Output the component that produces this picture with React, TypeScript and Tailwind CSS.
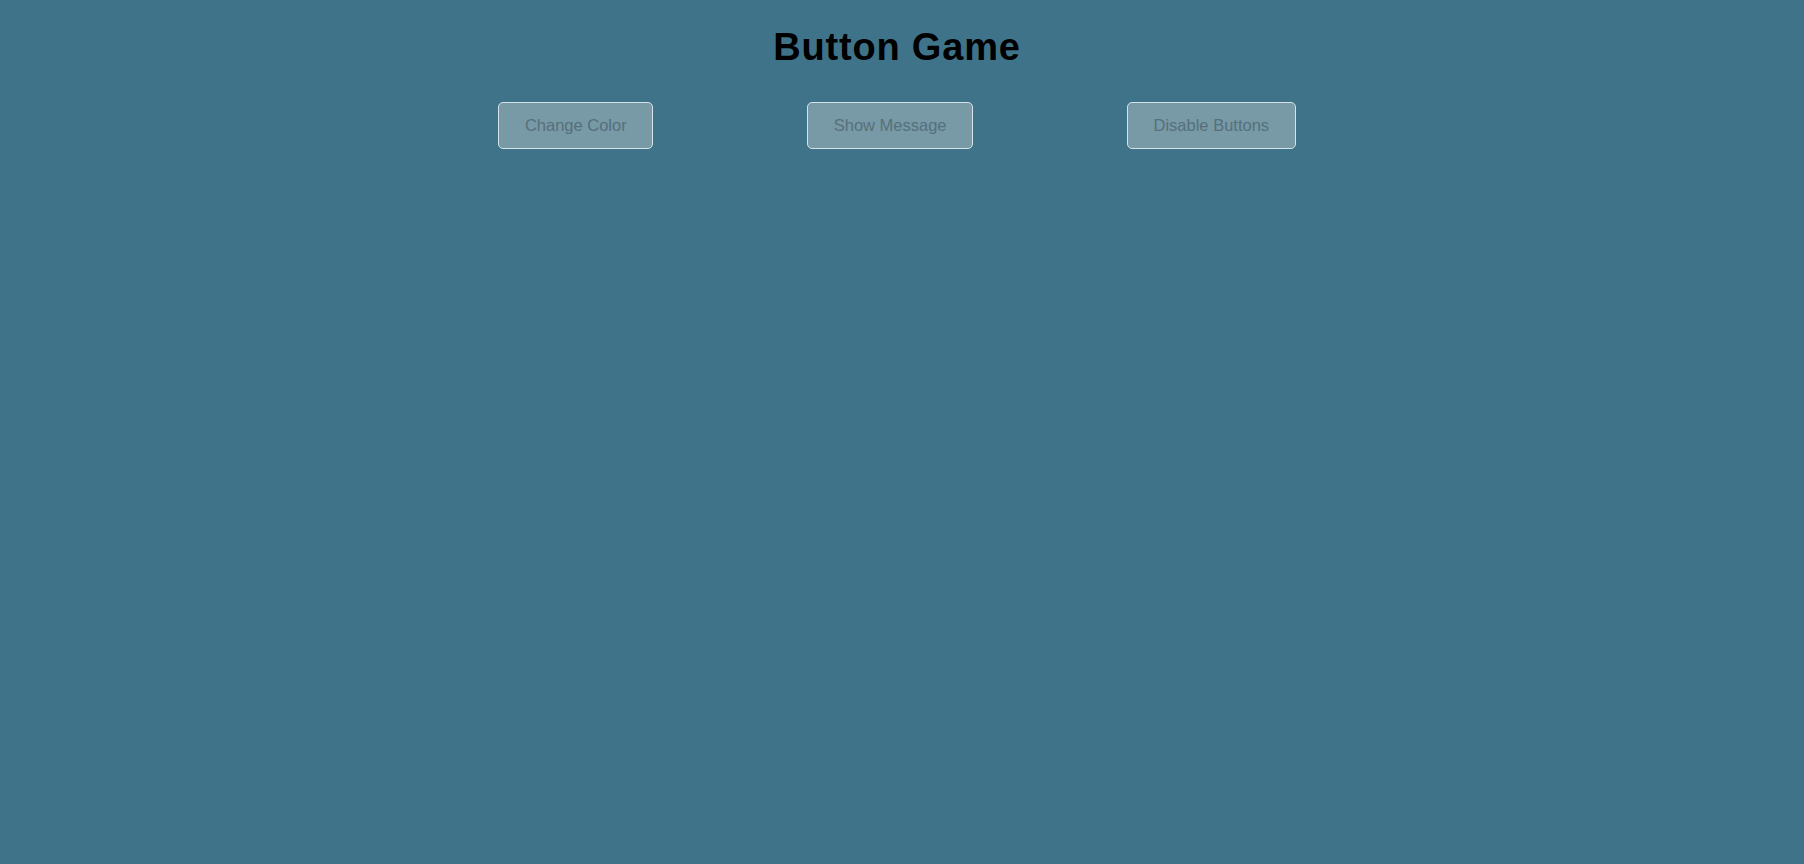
export default function App() {
  const buttons = ["Change Color", "Show Message", "Disable Buttons"];

  return (
    <div className="min-h-screen w-full bg-[#3f7389] pr-[10px] pt-[26px] font-['Liberation_Sans',Arial,sans-serif]">
      <h1 className="text-center text-[38px] leading-[42px] font-bold tracking-[0.8px] text-black">
        Button Game
      </h1>
      <div className="mt-[34px] flex justify-center gap-[154px]">
        {buttons.map((label) => (
          <button
            key={label}
            disabled
            className="h-[47px] rounded-[5px] border border-[#d6e2e7] bg-[#7899a6] px-[25.5px] text-[16.5px] text-[#55707c]"
          >
            {label}
          </button>
        ))}
      </div>
    </div>
  );
}
